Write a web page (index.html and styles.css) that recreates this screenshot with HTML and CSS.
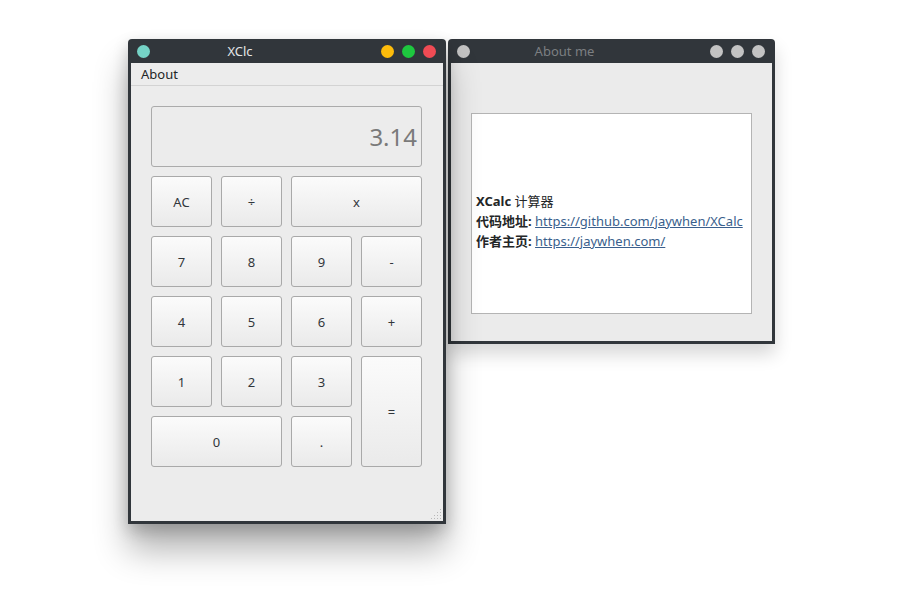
FILE: index.html
```html
<!DOCTYPE html>
<html lang="zh-CN">
<head>
<meta charset="utf-8">
<title>XClc</title>
<link rel="stylesheet" href="styles.css">
</head>
<body>
<div class="desktop">
  <div class="window about-win">
    <div class="titlebar inactive">
      <span class="dot grey lead"></span>
      <span class="title">About me</span>
      <span class="controls"><span class="dot grey"></span><span class="dot grey"></span><span class="dot grey"></span></span>
    </div>
    <div class="about-body">
      <div class="textbox">
        <p><b>XCalc</b> 计算器</p>
        <p><b>代码地址:</b> <a href="#">https://github.com/jaywhen/XCalc</a></p>
        <p><b>作者主页:</b> <a href="#">https://jaywhen.com/</a></p>
      </div>
    </div>
  </div>

  <div class="window calc-win">
    <div class="titlebar">
      <span class="dot teal lead"></span>
      <span class="title">XClc</span>
      <span class="controls"><span class="dot yellow"></span><span class="dot green"></span><span class="dot red"></span></span>
    </div>
    <div class="calc-body">
      <div class="menubar"><span class="menu-item">About</span></div>
      <div class="calc-main">
        <div class="display">3.14</div>
        <div class="keys">
          <button class="key">AC</button>
          <button class="key">÷</button>
          <button class="key span2">x</button>
          <button class="key">7</button>
          <button class="key">8</button>
          <button class="key">9</button>
          <button class="key">-</button>
          <button class="key">4</button>
          <button class="key">5</button>
          <button class="key">6</button>
          <button class="key">+</button>
          <button class="key">1</button>
          <button class="key">2</button>
          <button class="key">3</button>
          <button class="key tall">=</button>
          <button class="key span2">0</button>
          <button class="key">.</button>
        </div>
      </div>
      <svg class="grip" width="12" height="12" viewBox="0 0 12 12">
        <g fill="#b8b8b8">
          <rect x="10" y="1" width="1" height="1"/>
          <rect x="7" y="4" width="1" height="1"/><rect x="10" y="4" width="1" height="1"/>
          <rect x="4" y="7" width="1" height="1"/><rect x="7" y="7" width="1" height="1"/><rect x="10" y="7" width="1" height="1"/>
          <rect x="1" y="10" width="1" height="1"/><rect x="4" y="10" width="1" height="1"/><rect x="7" y="10" width="1" height="1"/><rect x="10" y="10" width="1" height="1"/>
        </g>
      </svg>
    </div>
  </div>
</div>
</body>
</html>
```
FILE: styles.css
```css
html, body {
  margin: 0;
  padding: 0;
  background: #ffffff;
}
body {
  font-family: "Noto Sans", "Noto Sans CJK SC", sans-serif;
  font-size: 13px;
  color: #232627;
}
.desktop {
  position: relative;
  width: 899px;
  height: 599px;
  overflow: hidden;
}
.window {
  position: absolute;
  box-sizing: border-box;
  background: #31363b;
  padding: 0 3px 3px;
  border-radius: 4px 4px 0 0;
  display: flex;
  flex-direction: column;
}
.calc-win {
  left: 128px;
  top: 39px;
  width: 318px;
  height: 485px;
  z-index: 2;
  box-shadow: 0 26px 34px rgba(0, 0, 0, 0.3), 0 6px 16px rgba(0, 0, 0, 0.2);
}
.about-win {
  left: 448px;
  top: 39px;
  width: 327px;
  height: 305px;
  z-index: 1;
  box-shadow: 0 10px 18px rgba(0, 0, 0, 0.16);
}
.titlebar {
  height: 24px;
  flex: none;
  display: flex;
  align-items: center;
  margin: 0 -3px;
  color: #e3e5e7;
}
.titlebar.inactive { color: #7c7f82; }
.dot {
  width: 13px;
  height: 13px;
  border-radius: 50%;
  display: inline-block;
  flex: none;
}
.lead { margin-left: 9px; }
.teal { background: #75d3c6; }
.yellow { background: #fdbc0b; }
.green { background: #1ec83f; }
.red { background: #f04b54; }
.grey { background: #c3c3c3; }
.title {
  flex: 1;
  text-align: center;
  font-size: 13px;
  line-height: 24px;
}
.controls {
  width: 116px;
  box-sizing: border-box;
  display: flex;
  justify-content: flex-end;
  gap: 8px;
  padding-right: 10px;
}
.calc-body {
  position: relative;
  flex: 1;
  background: #ececec;
  display: flex;
  flex-direction: column;
}
.menubar {
  height: 22px;
  border-bottom: 1px solid #d3d3d3;
  display: flex;
  align-items: center;
  padding-left: 10px;
}
.menu-item { color: #232627; }
.calc-main {
  padding: 20px 21px 0 20px;
  display: flex;
  flex-direction: column;
  gap: 9px;
}
.display {
  box-sizing: border-box;
  height: 61px;
  border: 1px solid #ababab;
  border-radius: 3px;
  background: #ececec;
  color: #7a7a7a;
  font-size: 24px;
  display: flex;
  align-items: center;
  justify-content: flex-end;
  padding-right: 4px;
}
.keys {
  display: grid;
  grid-template-columns: repeat(4, 61px);
  grid-auto-rows: 51px;
  column-gap: 9px;
  row-gap: 9px;
}
.key {
  font-family: "Noto Sans", sans-serif;
  font-size: 13px;
  color: #31363b;
  border: 1px solid #a9a9a9;
  border-radius: 3px;
  background: linear-gradient(#fbfbfb, #eaeaea);
  padding: 0;
  margin: 0;
}
.span2 { grid-column: span 2; }
.tall { grid-row: span 2; }
.grip {
  position: absolute;
  right: 1px;
  bottom: 1px;
}
.about-body {
  flex: 1;
  background: #ebebeb;
  padding: 50px 20px 0 20px;
}
.textbox {
  box-sizing: border-box;
  width: 281px;
  height: 201px;
  background: #ffffff;
  border: 1px solid #b4b4b4;
  padding: 77px 0 0 4px;
  font-family: "Noto Sans", "Noto Sans CJK SC", sans-serif;
}
.textbox p {
  margin: 0;
  line-height: 20px;
  white-space: nowrap;
}
.textbox b { font-weight: 700; }
.textbox a {
  color: #3a5f8d;
  text-decoration: underline;
}
```
